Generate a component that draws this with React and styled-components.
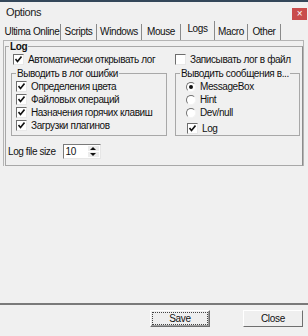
import React, { useState } from 'react';
import styled, { createGlobalStyle } from 'styled-components';

const GlobalStyle = createGlobalStyle`
    body {
        margin: 0;
        background: #f0f0f0;
        font-family: "Liberation Sans", Arial, sans-serif;
        font-size: 10px;
        letter-spacing: -0.4px;
        color: #111;
    }
`

const tabs = ['Ultima Online', 'Scripts', 'Windows', 'Mouse', 'Logs', 'Macro', 'Other']
const tabWidths = [57, 36, 45, 39, 34, 33, 33]

const errorItems = [
    'Определения цвета',
    'Файловых операций',
    'Назначения горячих клавиш',
    'Загрузки плагинов',
]

const outputs = ['MessageBox', 'Hint', 'Dev/null']

const Check = ({ checked }) => (
    <CheckBox>
        {checked ? (
            <svg width="7" height="7" viewBox="0 0 7 7">
                <path d="M0.5 3 L2.5 5.5 L6.5 0.5" stroke="#111" strokeWidth="1.6" fill="none" />
            </svg>
        ) : null}
    </CheckBox>
)

const App = () => {
    const [tab, setTab] = useState('Logs')
    const [output, setOutput] = useState('MessageBox')

    return (<Window>
        <GlobalStyle />
        <TitleBar>
            <span>Options</span>
            <CloseButton>×</CloseButton>
        </TitleBar>
        <TabStrip>
            {tabs.map((t, i) => (
                <Tab key={t} $active={t === tab} $width={tabWidths[i]} onClick={() => setTab(t)}>{t}</Tab>
            ))}
        </TabStrip>
        <Panel>
            <LogGroup>
                <LogLegend>Log</LogLegend>
                <TopRow>
                    <Option $left={7}><Check checked />Автоматически открывать лог</Option>
                    <Option $left={6}><Check />Записывать лог в файл</Option>
                </TopRow>
                <Groups>
                    <SubGroup $width={156}>
                        <SubLegend>Выводить в лог ошибки</SubLegend>
                        {errorItems.map(item => (
                            <Option key={item} $left={4}><Check checked />{item}</Option>
                        ))}
                    </SubGroup>
                    <SubGroup $width={125}>
                        <SubLegend>Выводить сообщения в...</SubLegend>
                        {outputs.map(o => (
                            <Option key={o} $left={10} onClick={() => setOutput(o)}>
                                <Radio $checked={o === output} />{o}
                            </Option>
                        ))}
                        <Option $left={11} $top={3}><Check checked />Log</Option>
                    </SubGroup>
                </Groups>
                <SizeRow>
                    <span>Log file size</span>
                    <SpinEdit>
                        <SpinValue>10</SpinValue>
                        <SpinButtons>
                            <SpinArrow $up />
                            <SpinArrow />
                        </SpinButtons>
                    </SpinEdit>
                </SizeRow>
            </LogGroup>
        </Panel>
        <Spacer />
        <Footer>
            <Button $focused>Save</Button>
            <Button>Close</Button>
        </Footer>
    </Window>);
}

export default App;

const Window = styled.div`
    width: 308px;
    height: 336px;
    box-sizing: border-box;
    border-top: 2px solid #34475a;
    display: flex;
    flex-direction: column;
    background: #f0f0f0;
`

const TitleBar = styled.div`
    height: 19px;
    display: flex;
    align-items: center;
    justify-content: space-between;
    padding: 0 1px 0 6px;
    font-size: 11px;
    color: #222;
`

const CloseButton = styled.div`
    width: 15px;
    height: 12px;
    background: #c94c4c;
    color: #fff;
    font-size: 10px;
    line-height: 12px;
    text-align: center;
    margin-top: 5px;
`

const TabStrip = styled.div`
    display: flex;
    height: 17px;
    padding-left: 4px;
    margin-top: 2px;
`

const Tab = styled.div`
    width: ${p => p.$width}px;
    box-sizing: border-box;
    text-align: center;
    white-space: nowrap;
    line-height: 16px;
    height: ${p => p.$active ? 19 : 16}px;
    margin-top: ${p => p.$active ? -2 : 1}px;
    border-right: 1px solid #8a8a8a;
    background: #f0f0f0;
    position: relative;
    z-index: ${p => p.$active ? 1 : 0};
    cursor: default;
`

const Panel = styled.div`
    margin: 0 4px 0 3px;
    height: 126px;
    border: 1px solid #b4b4b4;
    border-bottom: none;
    padding: 1px 0 0 1px;
    box-sizing: border-box;
`

const LogGroup = styled.fieldset`
    margin: 0;
    padding: 0;
    height: 124px;
    box-sizing: border-box;
    border: 1px solid #a8a8a8;
    border-right-color: #8c8c8c;
`

const LogLegend = styled.legend`
    font-weight: bold;
    padding: 0 1px;
    margin-left: 3px;
    font-size: 10px;
    line-height: 9px;
`

const TopRow = styled.div`
    display: flex;
    margin-top: 2px;
    & > *:first-child {
        width: 156px;
    }
`

const Option = styled.div`
    display: flex;
    align-items: center;
    height: 13px;
    margin-top: ${p => p.$top || 0}px;
    padding-left: ${p => p.$left}px;
    white-space: nowrap;
    gap: 4px;
`

const CheckBox = styled.span`
    width: 9px;
    height: 9px;
    flex: none;
    background: #fff;
    border: 1px solid;
    border-color: #6d6d6d #e8e8e8 #e8e8e8 #6d6d6d;
    display: flex;
    align-items: center;
    justify-content: center;
`

const Radio = styled.span`
    width: 10px;
    height: 10px;
    flex: none;
    border-radius: 50%;
    background: #fff;
    border: 1px solid;
    border-color: #707070 #f4f4f4 #f4f4f4 #707070;
    box-sizing: border-box;
    display: flex;
    align-items: center;
    justify-content: center;
    &::after {
        content: '';
        width: 4px;
        height: 4px;
        border-radius: 50%;
        background: ${p => p.$checked ? '#111' : 'transparent'};
    }
`

const Groups = styled.div`
    display: flex;
    gap: 8px;
    margin: 3px 0 0 5px;
`

const SubGroup = styled.fieldset`
    width: ${p => p.$width}px;
    box-sizing: border-box;
    height: 67px;
    margin: 0;
    padding: 2px 0 0 0;
    border: 1px solid #a8a8a8;
    display: flex;
    flex-direction: column;
`

const SubLegend = styled.legend`
    padding: 0 1px;
    margin-left: 4px;
    line-height: 9px;
    white-space: nowrap;
`

const SizeRow = styled.div`
    display: flex;
    align-items: center;
    gap: 7px;
    margin: 8px 0 0 2px;
`

const SpinEdit = styled.div`
    width: 38px;
    height: 15px;
    box-sizing: border-box;
    background: #fff;
    border: 1px solid;
    border-color: #7a7a7a #e6e6e6 #e6e6e6 #7a7a7a;
    display: flex;
    justify-content: space-between;
`

const SpinValue = styled.span`
    padding-left: 2px;
    line-height: 13px;
`

const SpinButtons = styled.div`
    width: 11px;
    display: flex;
    flex-direction: column;
    gap: 1px;
    padding: 1px 1px 1px 0;
`

const SpinArrow = styled.span`
    flex: 1;
    background: #ececec;
    display: flex;
    align-items: center;
    justify-content: center;
    &::after {
        content: '';
        border-left: 3px solid transparent;
        border-right: 3px solid transparent;
        ${p => p.$up ? 'border-bottom: 3px solid #111;' : 'border-top: 3px solid #111;'}
    }
`

const Spacer = styled.div`
    flex: 1;
`

const Footer = styled.div`
    border-top: 2px solid #7a7a7a;
    height: 33px;
    box-sizing: border-box;
    display: flex;
    justify-content: flex-end;
    align-items: flex-start;
    gap: 33px;
    padding: 5px 5px 0 0;
`

const Button = styled.button`
    width: 60px;
    height: 17px;
    font-family: "Liberation Sans", Arial, sans-serif;
    font-size: 10px;
    letter-spacing: -0.3px;
    color: #111;
    background: #efefef;
    border: 1px solid;
    border-color: #fff #6f6f6f #6f6f6f #fff;
    box-shadow: ${p => p.$focused ? 'inset -1px -1px 0 #a0a0a0' : 'none'};
    outline: ${p => p.$focused ? '1px dotted #444' : 'none'};
    outline-offset: -3px;
    padding: 0;
`
